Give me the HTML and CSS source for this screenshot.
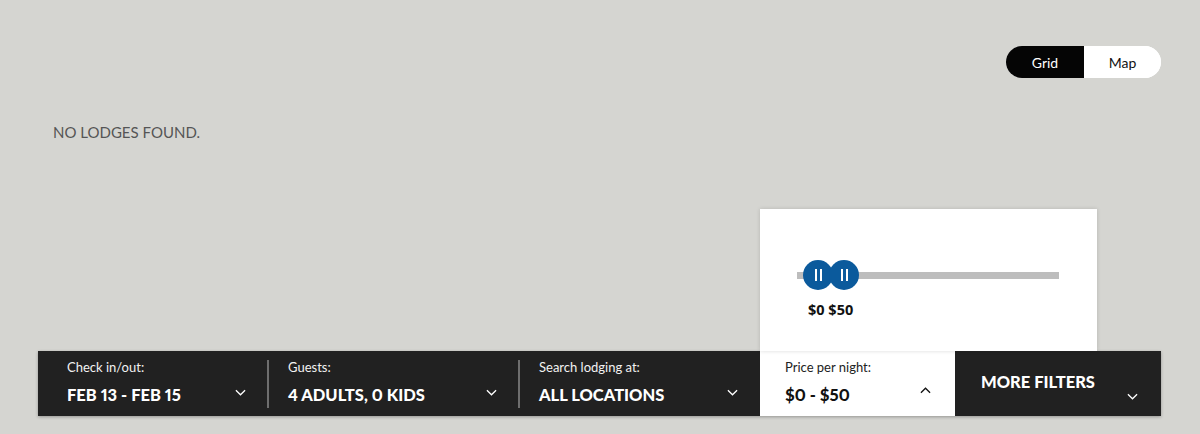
FILE: index.html
```html
<!DOCTYPE html>
<html lang="en">
<head>
    <meta charset="UTF-8">
    <meta name="viewport" content="width=device-width, initial-scale=1.0">
    <title>Lodging search</title>
    <link rel="stylesheet" href="styles.css">
</head>
<body>
    <div class="page">
        <div class="view-toggle">
            <button class="toggle-btn active">Grid</button>
            <button class="toggle-btn">Map</button>
        </div>

        <p class="empty">NO LODGES FOUND.</p>

        <div class="spacer"></div>

        <div class="filter-bar">
            <div class="filter sep">
                <span class="label">Check in/out:</span>
                <span class="value">FEB 13 - FEB 15</span>
                <svg class="chev" viewBox="0 0 12 7"><path d="M1 1l5 5 5-5"/></svg>
            </div>
            <div class="filter sep guests">
                <span class="label">Guests:</span>
                <span class="value">4 ADULTS, 0 KIDS</span>
                <svg class="chev" viewBox="0 0 12 7"><path d="M1 1l5 5 5-5"/></svg>
            </div>
            <div class="filter location">
                <span class="label">Search lodging at:</span>
                <span class="value">ALL LOCATIONS</span>
                <svg class="chev" viewBox="0 0 12 7"><path d="M1 1l5 5 5-5"/></svg>
            </div>
            <div class="filter price open">
                <div class="price-pop">
                    <div class="slider">
                        <div class="track"></div>
                        <div class="knob"><i></i><i></i></div>
                        <div class="knob second"><i></i><i></i></div>
                    </div>
                    <div class="range-text">$0 $50</div>
                </div>
                <span class="label">Price per night:</span>
                <span class="value">$0 - $50</span>
                <svg class="chev up" viewBox="0 0 12 7"><path d="M1 6l5-5 5 5"/></svg>
            </div>
            <div class="filter more">
                <span class="value">MORE FILTERS</span>
                <svg class="chev" viewBox="0 0 12 7"><path d="M1 1l5 5 5-5"/></svg>
            </div>
        </div>
    </div>
</body>
</html>
```

FILE: styles.css
```css
html, body { margin: 0; padding: 0; }
body { background: #d5d5d1; font-family: "Lato", "Noto Sans", sans-serif; }

.page { height: 434px; box-sizing: border-box; padding: 46px 39px 18px 38px; display: flex; flex-direction: column; }

.view-toggle { align-self: flex-end; display: flex; height: 32px; border-radius: 16px; overflow: hidden; background: #fff; }
.toggle-btn { width: 77px; border: none; background: #fff; color: #111; font-family: "Lato", sans-serif; font-size: 14px; padding: 0; cursor: pointer; }
.toggle-btn.active { width: 78px; background: #050505; color: #fff; }

.empty { margin: 45px 0 0 15px; font-size: 15px; line-height: 18px; color: #555; }

.spacer { flex: 1; }

.filter-bar { display: flex; height: 65px; background: #212121; box-shadow: 0 1px 3px rgba(0,0,0,0.3); }
.filter { position: relative; display: flex; flex-direction: column; justify-content: center; padding: 0 20px; color: #fff; }
.filter:first-child { width: 230px; padding-left: 29px; box-sizing: border-box; }
.guests { width: 251px; box-sizing: border-box; }
.location { width: 241px; box-sizing: border-box; }
.sep::after { content: ""; position: absolute; right: -1px; top: 9px; bottom: 8px; width: 2px; background: #6e6e6e; }

.label { font-size: 13px; line-height: 16px; color: #f2f2f2; margin-top: -4px; }
.value { font-size: 16.5px; line-height: 20px; font-weight: 900; margin-top: 10px; font-variant-numeric: proportional-nums; }

.chev { position: absolute; right: 22px; top: 38px; width: 11px; height: 7px; fill: none; stroke: #fff; stroke-width: 1.4; }

.price { width: 195px; box-sizing: border-box; padding-left: 25px; background: #fff; color: #111; }
.price .label { color: #222; }
.price .chev.up { stroke: #111; right: 24px; top: 36px; }

.more { flex: 1; padding-left: 26px; }
.more .value { margin-top: -4px; }
.more .chev { right: 23px; top: 42px; }

.price-pop { position: absolute; left: 0; bottom: 65px; width: 337px; height: 142px; background: #fff; box-shadow: 0 0 4px rgba(0,0,0,0.15); }
.slider { position: relative; margin: 51px 38px 0 37px; height: 30px; }
.track { position: absolute; left: 0; right: 0; top: 12px; height: 7px; background: #bdbdbd; }
.knob { position: absolute; left: 6px; top: 0; width: 30px; height: 30px; border-radius: 50%; background: #0b5a9c; display: flex; justify-content: center; align-items: center; gap: 3px; }
.knob.second { left: 32px; }
.knob i { display: block; width: 2px; height: 12px; background: #fff; }
.range-text { margin: 10px 0 0 48px; font-family: "Open Sans", sans-serif; font-weight: 700; font-size: 14.5px; color: #111; }
```
